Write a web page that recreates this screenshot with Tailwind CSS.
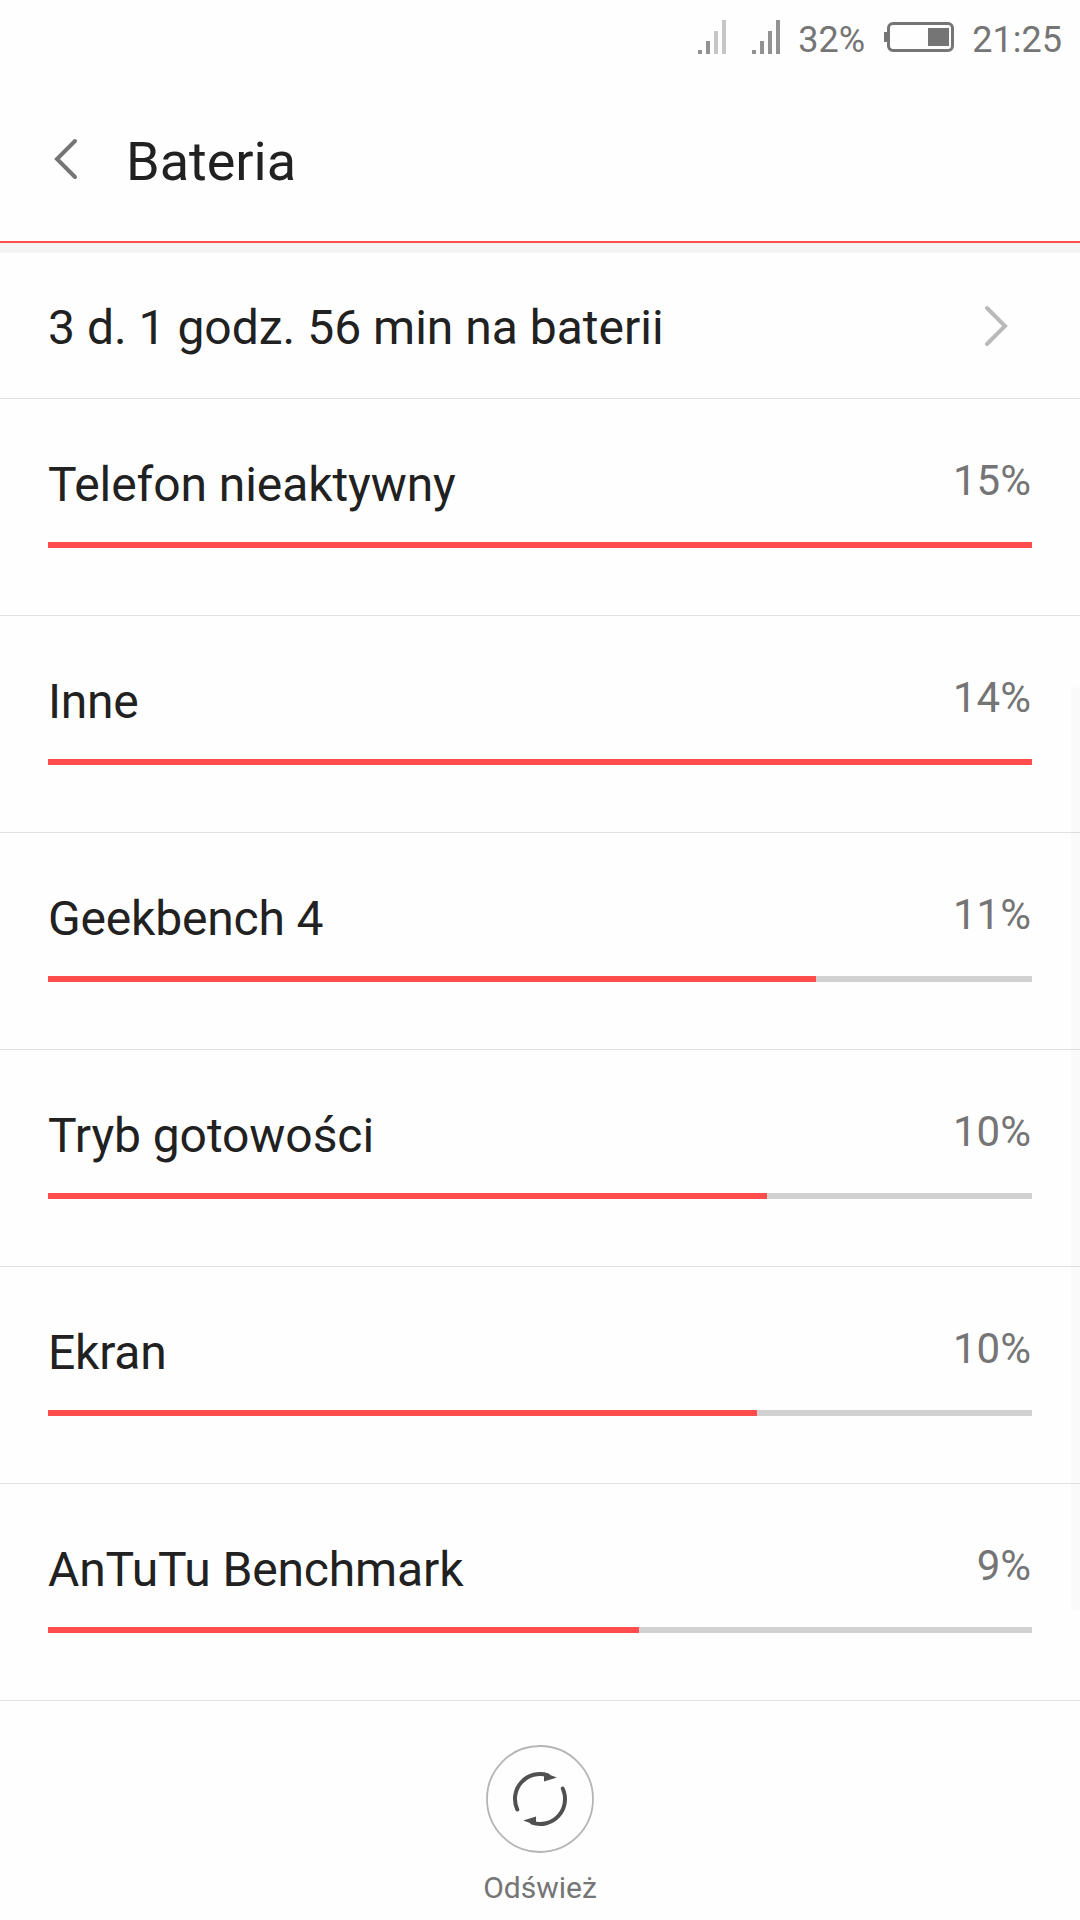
<!DOCTYPE html>
<html lang="pl">
<head>
<meta charset="utf-8">
<title>Bateria</title>
<script src="https://cdn.jsdelivr.net/npm/@tailwindcss/browser@4"></script>
</head>
<body class="relative flex h-[1920px] w-[1080px] flex-col overflow-hidden bg-[#fefefe] font-[Roboto,sans-serif] text-[#212121]">
<header class="flex h-[243px] flex-none flex-col border-b-2 border-[#ff4c4c]">
  <div class="flex h-[80px] items-start justify-end pr-[18px] text-[36px] leading-[42px] text-[#757575]">
    <svg class="mt-5 h-[34px] w-[28px]" viewBox="0 0 28 34"><path fill="#929292" d="M0 30h4v4H0zM8 21h4v13H8z"/><path fill="#c6c6c6" d="M16 11h4v23h-4zM24 0h4v34h-4z"/></svg>
    <svg class="mt-5 ml-[26px] h-[34px] w-[28px]" viewBox="0 0 28 34"><path fill="#929292" d="M0 30h4v4H0zM8 21h4v13H8zM16 11h4v23h-4zM24 0h4v34h-4z"/></svg>
    <span class="mt-[19px] w-[104px] pl-[18px]">32%</span>
    <svg class="mt-[22px] h-[30px] w-[70px]" viewBox="0 0 70 30"><rect x="4.5" y="1.5" width="64" height="27" rx="4.5" fill="none" stroke="#757575" stroke-width="3"/><path fill="#757575" d="M0 10h4v10H0zM44 6h21v18H44z"/></svg>
    <span class="mt-[19px] ml-[18px]">21:25</span>
  </div>
  <div class="flex h-[161px] items-start">
    <svg class="mt-[58px] ml-[54px] h-[42px] w-[24px]" viewBox="0 0 24 42"><path d="M21 3 3 21l18 18" fill="none" stroke="#757575" stroke-width="4" stroke-linecap="round"/></svg>
    <h1 class="mt-[50px] ml-[48px] text-[54px] leading-[64px]">Bateria</h1>
  </div>
</header>
<main class="flex flex-none flex-col border-t-[10px] border-[#f4f4f4]">
  <div class="flex h-[146px] items-start justify-between border-b border-[#e1e1e1] pr-[72px] pl-12">
    <span class="mt-[46px] text-[48px] leading-[57px]">3 d. 1 godz. 56 min na baterii</span>
    <svg class="mt-[52px] h-[42px] w-[24px]" viewBox="0 0 24 42"><path d="m3 3 18 18L3 39" fill="none" stroke="#b9b9b9" stroke-width="4" stroke-linecap="round"/></svg>
  </div>
  <div class="h-[217px] border-b border-[#e1e1e1] px-12">
    <div class="flex h-[143px] items-start justify-between"><span class="mt-[57px] text-[48px] leading-[57px] tracking-[-0.08px]">Telefon nieaktywny</span><span class="mt-[57px] mr-px text-[42px] leading-[49px] text-[#757575]">15%</span></div>
    <div class="h-[6px] bg-[#d1d1d1]"><div class="h-full w-[984px] bg-[#ff4c4c]"></div></div>
  </div>
  <div class="h-[217px] border-b border-[#e1e1e1] px-12">
    <div class="flex h-[143px] items-start justify-between"><span class="mt-[57px] text-[48px] leading-[57px] tracking-[-0.25px]">Inne</span><span class="mt-[57px] mr-px text-[42px] leading-[49px] text-[#757575]">14%</span></div>
    <div class="h-[6px] bg-[#d1d1d1]"><div class="h-full w-[984px] bg-[#ff4c4c]"></div></div>
  </div>
  <div class="h-[217px] border-b border-[#e1e1e1] px-12">
    <div class="flex h-[143px] items-start justify-between"><span class="mt-[57px] text-[48px] leading-[57px] tracking-[-0.18px]">Geekbench 4</span><span class="mt-[57px] mr-px text-[42px] leading-[49px] text-[#757575]">11%</span></div>
    <div class="h-[6px] bg-[#d1d1d1]"><div class="h-full w-[768px] bg-[#ff4c4c]"></div></div>
  </div>
  <div class="h-[217px] border-b border-[#e1e1e1] px-12">
    <div class="flex h-[143px] items-start justify-between"><span class="mt-[57px] text-[48px] leading-[57px] tracking-[-0.08px]">Tryb gotowości</span><span class="mt-[57px] mr-px text-[42px] leading-[49px] text-[#757575]">10%</span></div>
    <div class="h-[6px] bg-[#d1d1d1]"><div class="h-full w-[719px] bg-[#ff4c4c]"></div></div>
  </div>
  <div class="h-[217px] border-b border-[#e1e1e1] px-12">
    <div class="flex h-[143px] items-start justify-between"><span class="mt-[57px] text-[48px] leading-[57px] tracking-[-0.2px]">Ekran</span><span class="mt-[57px] mr-px text-[42px] leading-[49px] text-[#757575]">10%</span></div>
    <div class="h-[6px] bg-[#d1d1d1]"><div class="h-full w-[709px] bg-[#ff4c4c]"></div></div>
  </div>
  <div class="h-[217px] border-b border-[#e1e1e1] px-12">
    <div class="flex h-[143px] items-start justify-between"><span class="mt-[57px] text-[48px] leading-[57px] tracking-[-0.15px]">AnTuTu Benchmark</span><span class="mt-[57px] mr-px text-[42px] leading-[49px] text-[#757575]">9%</span></div>
    <div class="h-[6px] bg-[#d1d1d1]"><div class="h-full w-[591px] bg-[#ff4c4c]"></div></div>
  </div>
</main>
<footer class="flex flex-1 flex-col items-center pt-[43px]">
  <svg class="h-[110px] w-[110px] flex-none" viewBox="-55 -55 110 110"><circle r="53" fill="none" stroke="#b5b5b5" stroke-width="1.8"/><g fill="none" stroke="#505050" stroke-width="4" stroke-linecap="round"><path d="M-22.7 10.5A25 25 0 0 1 8-23.7"/><path d="M22.7-10.5A25 25 0 0 1-8 23.7"/></g><path fill="#505050" d="M4-26.2 16.8-21.4 4-17.4zM-4 26.2-16.8 21.4-4 17.4z"/></svg>
  <span class="mt-[16px] text-[30px] leading-[36px] text-[#757575]">Odśwież</span>
</footer>
<div class="absolute top-[687px] right-0 h-[924px] w-[9px] rounded-[4px] bg-black/[0.016]"></div>
</body>
</html>
